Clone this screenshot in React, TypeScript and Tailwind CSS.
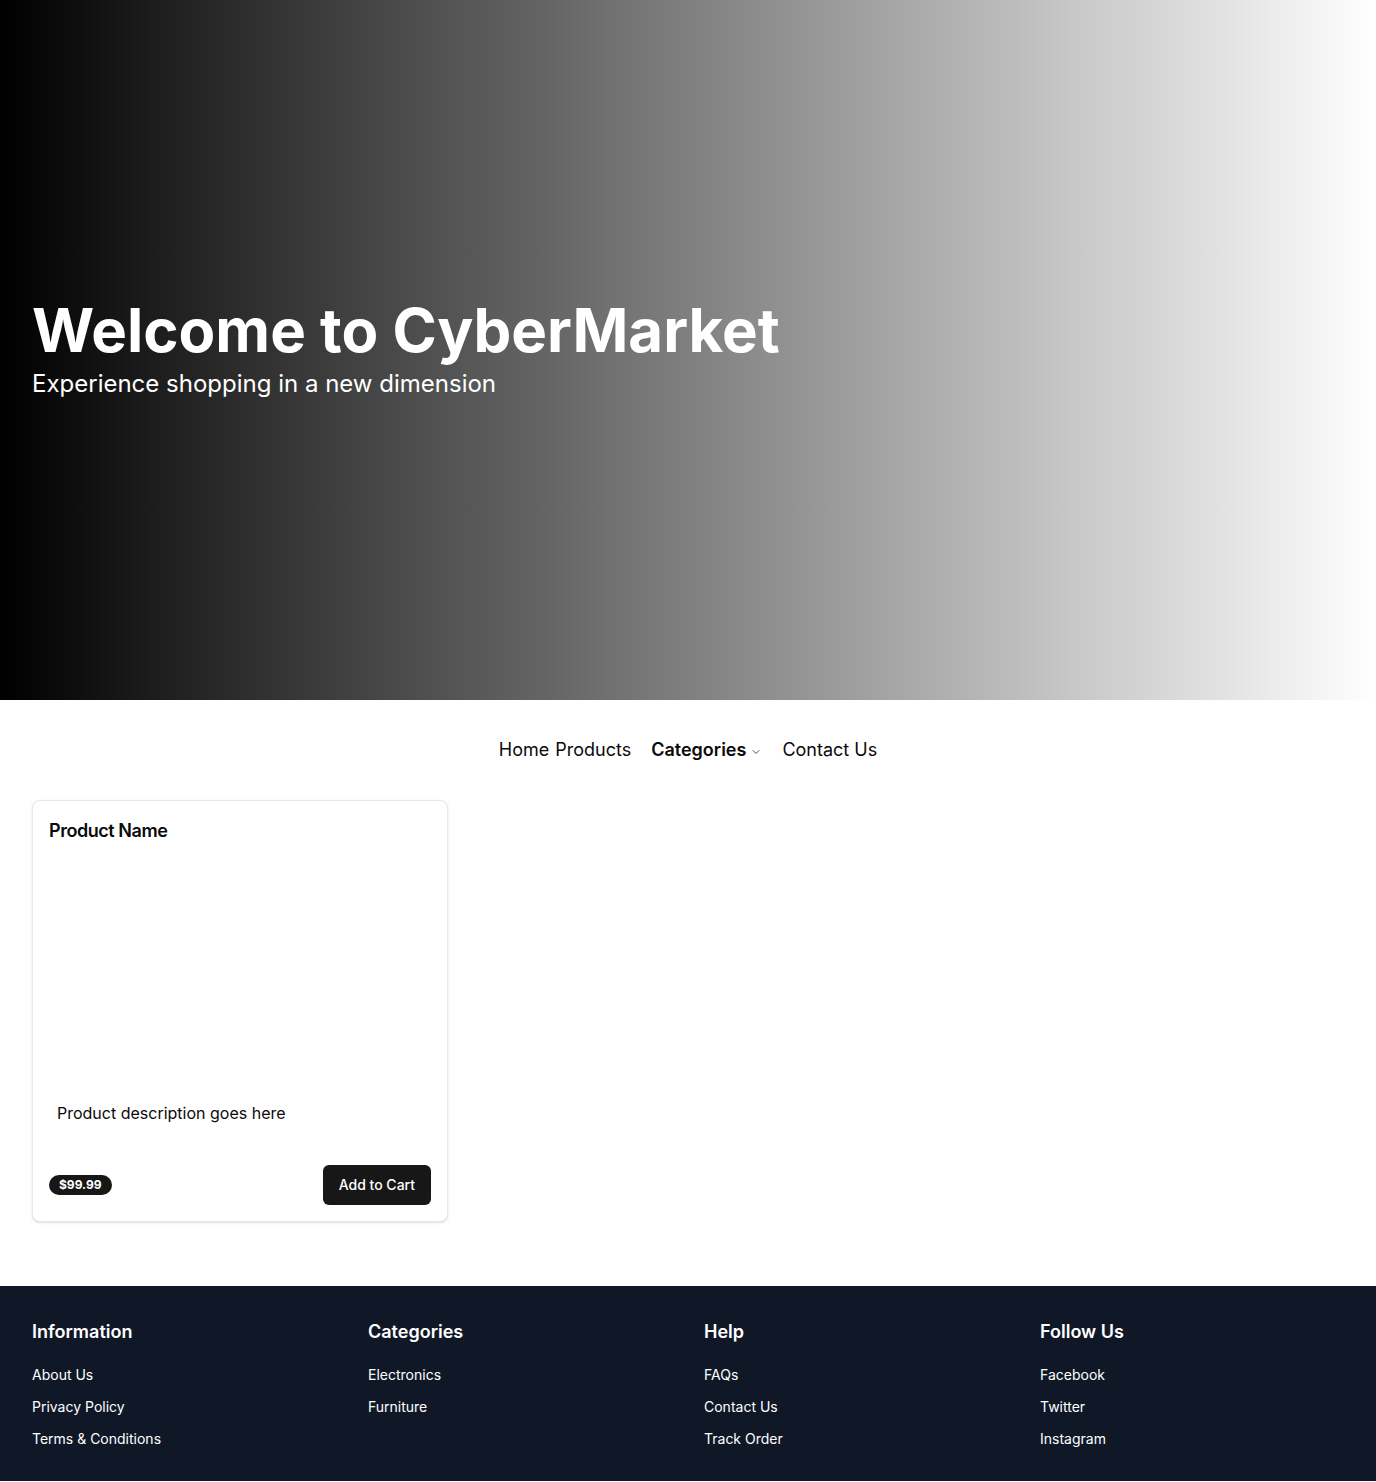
import { ChevronDown } from "lucide-react";

const footerCols = [
  { title: "Information", links: ["About Us", "Privacy Policy", "Terms & Conditions"] },
  { title: "Categories", links: ["Electronics", "Furniture"] },
  { title: "Help", links: ["FAQs", "Contact Us", "Track Order"] },
  { title: "Follow Us", links: ["Facebook", "Twitter", "Instagram"] },
];

export default function App() {
  return (
    <div className="min-h-screen bg-white font-['Inter',sans-serif] text-[#0a0a0a]">
      {/* hero */}
      <section className="h-[700px] bg-linear-to-r/srgb from-black to-white flex items-center px-8">
        <div>
          <h1 className="text-6xl font-bold text-white mb-2">Welcome to CyberMarket</h1>
          <p className="text-2xl text-white">Experience shopping in a new dimension</p>
        </div>
      </section>

      {/* nav */}
      <nav className="h-[100px] flex items-center justify-center gap-5 text-lg">
        <div className="flex items-center gap-1.5">
          <a>Home</a>
          <a>Products</a>
        </div>
        <button className="flex items-center gap-1 font-semibold">
          Categories
          <ChevronDown className="w-3 h-3 mt-1 opacity-70" />
        </button>
        <a>Contact Us</a>
      </nav>

      {/* products */}
      <main className="px-8 pb-16">
        <div className="grid grid-cols-3 gap-8">
          <div className="border border-gray-200 rounded-lg shadow-sm p-4 bg-white">
            <h3 className="text-lg font-semibold tracking-tight">Product Name</h3>
            <div className="h-64" />
            <p className="px-2 text-base">Product description goes here</p>
            <div className="mt-10 h-10 flex items-center justify-between">
              <span className="bg-[#171717] text-white text-xs font-bold rounded-full px-2.5 py-0.5">$99.99</span>
              <button className="bg-[#171717] text-white text-sm font-medium rounded-md h-10 px-4">Add to Cart</button>
            </div>
          </div>
        </div>
      </main>

      {/* footer */}
      <footer className="bg-gray-900 text-white px-8 py-8">
        <div className="grid grid-cols-4 gap-8">
          {footerCols.map((col) => (
            <div key={col.title}>
              <h4 className="text-lg font-semibold mb-[19px]">{col.title}</h4>
              <ul className="space-y-3 text-sm">
                {col.links.map((l) => (
                  <li key={l}>{l}</li>
                ))}
              </ul>
            </div>
          ))}
        </div>
      </footer>
    </div>
  );
}
